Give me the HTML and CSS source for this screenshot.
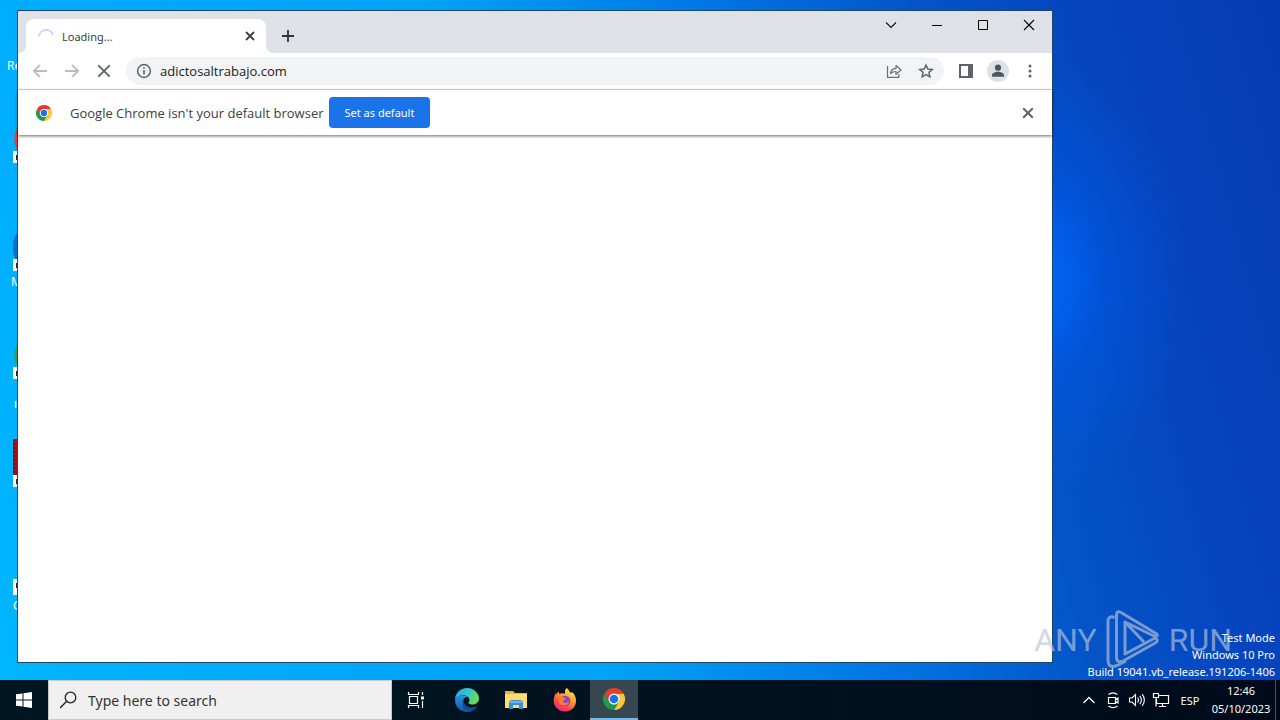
FILE: index.html
```html
<!DOCTYPE html>
<html lang="en">
<head>
    <meta charset="UTF-8">
    <meta name="viewport" content="width=device-width, initial-scale=1.0">
    <title>Desktop</title>
    <link rel="stylesheet" href="styles.css">
</head>
<body>
    <main class="desktop">
        <!-- icons peeking out from behind the browser -->
        <div class="desktop-icons">
            <span class="label label-recycle">Re</span>
            <span class="icon icon-red"></span>
            <span class="icon icon-blue"></span>
            <span class="label label-m">M</span>
            <span class="icon icon-green"></span>
            <span class="label label-tick">ı</span>
            <span class="icon icon-book"></span>
            <span class="icon icon-white"></span>
            <span class="label label-c">C</span>
            <span class="icon-top"></span>
        </div>

        <section class="window">
            <header class="tabstrip">
                <div class="tab">
                    <svg class="spinner" width="16" height="16" viewBox="0 0 16 16"><path d="M1 8.500A7.200 7.200 0 0 1 15 7" fill="none" stroke="#c9d8fa" stroke-width="2"/></svg>
                    <span class="tab-title">Loading...</span>
                    <button class="tab-close" aria-label="Close tab">
                        <svg width="16" height="16" viewBox="0 0 16 16"><path d="M4 4l8 8M12 4l-8 8" stroke="#3c4043" stroke-width="1.800"/></svg>
                    </button>
                </div>
                <button class="new-tab" aria-label="New tab">
                    <svg width="16" height="16" viewBox="0 0 16 16"><path d="M8 2v12M2 8h12" stroke="#303338" stroke-width="1.800"/></svg>
                </button>
                <div class="window-controls">
                    <button aria-label="Search tabs"><svg width="16" height="16" viewBox="0 0 16 16"><path d="M3 5.500l5 5 5-5" fill="none" stroke="#111" stroke-width="1.100"/></svg></button>
                    <button aria-label="Minimize"><svg width="16" height="16" viewBox="0 0 16 16"><path d="M3 8.500h10" stroke="#000"/></svg></button>
                    <button aria-label="Maximize"><svg width="16" height="16" viewBox="0 0 16 16"><path d="M3.500 3.500h9v9h-9z" fill="none" stroke="#000"/></svg></button>
                    <button aria-label="Close"><svg width="16" height="16" viewBox="0 0 16 16"><path d="M3 3l10 10M13 3L3 13" stroke="#000" stroke-width="1.100"/></svg></button>
                </div>
            </header>

            <div class="toolbar">
                <button class="tool" aria-label="Back"><svg width="16" height="16" viewBox="0 0 16 16"><path d="M15 8H2M8 1.800L1.800 8 8 14.200" fill="none" stroke="#babcbe" stroke-width="1.800"/></svg></button>
                <button class="tool" aria-label="Forward"><svg width="16" height="16" viewBox="0 0 16 16"><path d="M1 8h13M8 1.800L14.200 8 8 14.200" fill="none" stroke="#babcbe" stroke-width="1.800"/></svg></button>
                <button class="tool" aria-label="Stop"><svg width="16" height="16" viewBox="0 0 16 16"><path d="M2.300 2.300l11.400 11.400M13.700 2.300L2.300 13.700" stroke="#5f6368" stroke-width="1.900"/></svg></button>
                <div class="omnibox">
                    <svg width="16" height="16" viewBox="0 0 16 16"><circle cx="8" cy="8" r="6.400" fill="none" stroke="#5f6368" stroke-width="1.500"/><path d="M8 7v4.500M8 4.300v1.600" stroke="#5f6368" stroke-width="1.600"/></svg>
                    <input class="address" type="text" aria-label="Address" value="adictosaltrabajo.com">
                    <button class="tool" aria-label="Share"><svg width="16" height="16" viewBox="0 0 16 16"><path d="M1.500 3v11.300h11.300V11" fill="none" stroke="#6b6f73" stroke-width="1.200"/><path d="M4.500 10.500c.5-3.500 2-5 5.500-5.200V2.500L15 7l-5 4.300V8.500c-2.500 0-4 .4-5.500 2z" fill="none" stroke="#6b6f73" stroke-width="1.200" stroke-linejoin="round"/></svg></button>
                    <button class="tool" aria-label="Bookmark"><svg width="16" height="16" viewBox="0 0 16 16"><path d="M8 2l1.800 4.100 4.500.4-3.400 2.900 1 4.400L8 11.500l-3.900 2.300 1-4.400L1.700 6.500l4.500-.4z" fill="none" stroke="#5f6368" stroke-width="1.500"/></svg></button>
                </div>
                <button class="tool" aria-label="Side panel"><svg width="16" height="16" viewBox="0 0 16 16"><path d="M1 1h14v14H1zM3 3v10h7V3z" fill="#5f6368" fill-rule="evenodd"/></svg></button>
                <button class="tool" aria-label="Profile"><svg width="22" height="22" viewBox="0 0 22 22"><circle cx="11" cy="11" r="11" fill="#dee1e6"/><circle cx="11" cy="7.700" r="3.100" fill="#4e5662"/><path d="M5 16.700v-1.500c0-2.200 3.500-3.400 6-3.400s6 1.200 6 3.400v1.500z" fill="#4e5662"/></svg></button>
                <button class="tool" aria-label="Menu"><svg width="16" height="16" viewBox="0 0 16 16"><g fill="#5f6368"><circle cx="8" cy="3" r="1.500"/><circle cx="8" cy="8" r="1.500"/><circle cx="8" cy="13" r="1.500"/></g></svg></button>
            </div>

            <div class="infobar">
                <svg width="16" height="16" viewBox="0 0 48 48"><use href="#chrome-logo"/></svg>
                <span class="infobar-text">Google Chrome isn't your default browser</span>
                <button class="set-default">Set as default</button>
                <button class="infobar-close" aria-label="Dismiss"><svg width="16" height="16" viewBox="0 0 16 16"><path d="M3.200 3.200l9.600 9.600M12.800 3.200l-9.600 9.600" stroke="#5f6368" stroke-width="2"/></svg></button>
            </div>
            <div class="page"></div>
        </section>

        <div class="watermark">
            <span>ANY</span>
            <svg width="54" height="60" viewBox="0 0 54 60"><path d="M8.500 7.500Q2 5 2 12V50Q2 59 11 55.500L20 51M10.500 48V5Q10.500 0 15 2.500L50 23.500Q53 26 49 26.500L19 12V44L49 28Q53 29.500 50 32.500L18 50.500Q10.500 54 10.500 47M19 12L38 32" fill="none" stroke="currentColor" stroke-width="3" stroke-linejoin="round"/></svg>
            <span>RUN</span>
        </div>
        <div class="build-info">
            <p>Test Mode</p>
            <p>Windows 10 Pro</p>
            <p>Build 19041.vb_release.191206-1406</p>
        </div>
    </main>

    <footer class="taskbar">
        <button class="task start" aria-label="Start"><svg width="16" height="16" viewBox="0 0 16 16"><path d="M0 2.300l6.500-.9v6.100H0zM7.500 1.200L16 0v7.500H7.500zM0 8.500h6.500v6.100L0 13.700zM7.500 8.500H16V16l-8.500-1.200z" fill="#fff"/></svg></button>
        <div class="search">
            <svg width="18" height="18" viewBox="0 0 18 18"><circle cx="10.500" cy="6.500" r="5.300" fill="none" stroke="#222" stroke-width="1.300"/><path d="M6.700 10.300L0 17" stroke="#222" stroke-width="1.400"/></svg>
            <input type="text" aria-label="Search" placeholder="Type here to search">
        </div>
        <button class="task" aria-label="Task view"><svg width="18" height="18" viewBox="0 0 18 18"><path d="M1.500 1v2.500h10V1M1.500 17v-2.500h10V17M2.500 5.500h8v7h-8zM15.500 1v3M15.500 10v7" fill="none" stroke="#fff" stroke-width="1.200"/><path d="M14 5.500h3v3h-3z" fill="#fff"/></svg></button>
        <nav class="pinned">
            <button class="task" aria-label="Edge">
                <svg width="24" height="24" viewBox="0 0 24 24">
                    <defs>
                        <linearGradient id="edge-top" x1="0" y1="0" x2="1" y2="0.300"><stop offset="0" stop-color="#28a8e8"/><stop offset="0.600" stop-color="#36c5c9"/><stop offset="1" stop-color="#66dd55"/></linearGradient>
                        <linearGradient id="edge-bottom" x1="0" y1="0" x2="0" y2="1"><stop offset="0" stop-color="#2595e5"/><stop offset="1" stop-color="#1454a5"/></linearGradient>
                    </defs>
                    <path d="M0 12C0 5 5.500 0 12 0s12 5 12 10.500c0 3.500-2.700 6-6.200 6-2.500 0-4.300-.8-4.300-1.800 0-.6 1-1 1-2.700C14.500 9 11 7.300 7.800 7.300 4 7.300 1 9.500 0 12z" fill="url(#edge-top)"/>
                    <path d="M0 12c1-3 4-4.800 7.500-4.800 2.500 0 4.200.8 5 1.800-3.500.2-4.200 2.300-4.200 4.300 0 4.300 4.700 7.700 10.200 6.200 1.500-.4 3-1.300 3.500-1.300C20 22 16 24 12 24 5 24 0 18.500 0 12z" fill="url(#edge-bottom)"/>
                    <path d="M8.300 11.500C5.500 17 9 23 14.500 23.700c3.500-.7 6-2.700 7.500-5.500-6 3.500-13.500.5-13.700-6.700z" fill="#134b94"/>
                </svg>
            </button>
            <button class="task" aria-label="File Explorer"><svg width="22" height="18" viewBox="0 0 22 18"><path d="M0 0h8l2 2h12v15H0z" fill="#e8b33b"/><path d="M1 3h21v14H0V4z" fill="#ffdc70"/><path d="M4 18v-7l2-2h10l2 2v7h-4v-4H8v4z" fill="#3f8ed0"/><path d="M5 11h12" stroke="#67b4ec" stroke-width="2"/></svg></button>
            <button class="task" aria-label="Firefox">
                <svg width="24" height="24" viewBox="0 0 24 24">
                    <defs><linearGradient id="fox" x1="0.800" y1="0" x2="0.200" y2="1"><stop offset="0" stop-color="#fff04f"/><stop offset="0.400" stop-color="#ff9a2e"/><stop offset="0.700" stop-color="#ff4b45"/><stop offset="1" stop-color="#e5208a"/></linearGradient></defs>
                    <path d="M13.500 0c2 1.200 3 3.200 3.500 4.500.6 0 1.500.2 2-.5 3 2.500 4.300 6 4 9.500-.4 5.700-5 10-11 10S.7 19 .7 13c0-3.500 1-6.500 2.600-8.500v2.200C4 5.200 5 4 6 3.500V6c2-1 4.500-1 6 0-.5-2 0-4.500 1.500-6z" fill="url(#fox)"/>
                    <circle cx="12" cy="13" r="5.300" fill="#8047cf"/>
                    <path d="M5 9.500c2-1.800 4.500-1.200 6 .2l2 .3c0 1.500-2.500 1.500-3 2.800.2 2.500 4.300 3 6.500.5-.5 5-9 5.500-10.800 1C5 12.500 5 11 5 9.500z" fill="#ff7b36"/>
                </svg>
            </button>
            <button class="task active" aria-label="Chrome">
                <svg width="22" height="22" viewBox="0 0 48 48">
                    <g id="chrome-logo">
                        <path d="M24 12h20.800A24 24 0 0 1 24 48l10.400-18z" fill="#fcc934"/>
                        <path d="M3.200 12A24 24 0 0 0 24 48l10.400-18H13.600z" fill="#20994a"/>
                        <path d="M24 12h20.800A24 24 0 0 0 3.200 12l10.400 18z" fill="#e33b2e"/>
                        <circle cx="24" cy="24" r="12" fill="#fff"/>
                        <circle cx="24" cy="24" r="9.500" fill="#1a73e8"/>
                    </g>
                </svg>
            </button>
        </nav>
        <div class="tray">
            <button aria-label="Show hidden icons"><svg width="18" height="18" viewBox="0 0 18 18"><path d="M3.500 12L9 6.500l5.500 5.500" fill="none" stroke="#fff" stroke-width="1.300"/></svg></button>
            <button aria-label="Camera"><svg width="18" height="18" viewBox="0 0 18 18"><path d="M4.500 6.500h7v6h-7zM11.500 8.500l2.500-1.500v5l-2.500-1.500M4.500 3.500Q9 .2 13.500 3.500M4.500 15Q9 18.300 13.500 15" fill="none" stroke="#fff" stroke-width="1.200"/></svg></button>
            <button aria-label="Volume"><svg width="18" height="18" viewBox="0 0 18 18"><path d="M1.500 7h2.500l3.500-3.500v11L4 11H1.500zM9.500 6.500q2 2.500 0 5M11.800 4.800q3.200 4.200 0 8.400M14.200 3.200q4.300 5.800 0 11.600" fill="none" stroke="#fff" stroke-width="1.100"/></svg></button>
            <button aria-label="Network"><svg width="18" height="18" viewBox="0 0 18 18"><path d="M6 4.500h10.500v8H4.500V8M10.500 12.500v3M7 15.500h7M1.500 2.500h5v4h-5zM4 6.500v9" fill="none" stroke="#fff" stroke-width="1.200"/></svg></button>
            <button class="lang">ESP</button>
            <button class="clock"><span>12:46</span><span>05/10/2023</span></button>
            <button class="show-desktop" aria-label="Show desktop"></button>
        </div>
    </footer>
</body>
</html>
```

FILE: styles.css
```css
* {
    box-sizing: border-box;
}

body {
    margin: 0;
    height: 100vh;
    display: flex;
    flex-direction: column;
    overflow: hidden;
    font-family: "Noto Sans", "Open Sans", sans-serif;
    font-size: 11px;
}

button {
    display: flex;
    align-items: center;
    justify-content: center;
    padding: 0;
    border: none;
    background: none;
    font: inherit;
    color: inherit;
}

input {
    flex: 1;
    min-width: 0;
    padding: 0;
    border: none;
    outline: none;
    background: none;
    font: inherit;
    color: inherit;
}

svg {
    display: block;
    flex: none;
}

.desktop {
    position: relative;
    flex: 1;
    background:
        radial-gradient(ellipse 150px 220px at 81% 41%, #0068ff, rgba(0, 90, 230, 0.5) 45%, transparent),
        linear-gradient(75deg, #00b6ff 0%, #00aafc 18%, #00a2f6 42%, #0078e6 60%, #0454c8 75%, #0545bf 86%, #053bb2 100%);
}

/* desktop icons */
.desktop-icons {
    position: absolute;
    inset: 0;
    color: #fff;
    font-size: 12px;
}

.label,
.icon,
.icon-top {
    position: absolute;
}

.label {
    line-height: 16px;
}

.label-recycle {
    left: 7px;
    top: 58px;
}

.label-m {
    left: 11px;
    top: 274px;
}

.label-tick {
    left: 14px;
    top: 396px;
}

.label-c {
    left: 13px;
    top: 598px;
}

.icon {
    left: 13px;
    width: 48px;
    height: 48px;
}

/* shortcut arrow badge */
.icon::after {
    content: "";
    position: absolute;
    left: 0;
    bottom: 0;
    width: 12px;
    height: 12px;
    background: linear-gradient(#222, #222) 3px 4px / 5px 5px no-repeat #fff;
}

.icon-red {
    top: 115px;
    background: radial-gradient(circle, #f03a3a 22px, transparent 23px);
}

.icon-blue {
    top: 223px;
    background: radial-gradient(circle, #0b72cc 24px, transparent 25px);
}

.icon-green {
    top: 331px;
    background: radial-gradient(circle, #3f9a4c 22px, transparent 23px);
}

.icon-book {
    top: 439px;
    background: repeating-linear-gradient(#5c1420 0 2px, transparent 2px 4px) 0 0 / 2px 100% no-repeat #b00c18;
}

.icon-white {
    top: 547px;
}

.icon-white::after {
    height: 16px;
}

.icon-top {
    left: 168px;
    top: 9px;
    width: 28px;
    height: 28px;
    border-radius: 50%;
    background: #8c7c80;
}

/* browser window */
.window {
    position: absolute;
    inset: 10px 227px 17px 17px;
    display: flex;
    flex-direction: column;
    border: 1px solid #1c4866;
    background: #fff;
}

.tabstrip {
    display: flex;
    align-items: flex-end;
    height: 42px;
    padding-left: 8px;
    background: #dee1e6;
}

.tab {
    position: relative;
    display: flex;
    align-items: center;
    gap: 8px;
    width: 240px;
    height: 34px;
    padding: 0 8px 0 12px;
    border-radius: 8px 8px 0 0;
    background: #fff;
    color: #3c4043;
}

.tab::before,
.tab::after {
    content: "";
    position: absolute;
    bottom: 0;
    width: 8px;
    height: 8px;
}

.tab::before {
    right: 100%;
    background: radial-gradient(circle at 0 0, transparent 8px, #fff 8px);
}

.tab::after {
    left: 100%;
    background: radial-gradient(circle at 100% 0, transparent 8px, #fff 8px);
}

.tab-title {
    flex: 1;
}

.new-tab {
    width: 28px;
    height: 34px;
    margin-left: 8px;
}

.window-controls {
    display: flex;
    align-self: flex-start;
    margin-left: auto;
}

.window-controls button {
    width: 46px;
    height: 28px;
}

.toolbar {
    display: flex;
    align-items: center;
    height: 37px;
    padding: 0 6px;
    border-bottom: 1px solid #dadce0;
}

.tool {
    flex: none;
    width: 32px;
    height: 28px;
}

.omnibox {
    flex: 1;
    display: flex;
    align-items: center;
    height: 28px;
    margin: 0 6px;
    padding: 0 2px 0 10px;
    border-radius: 14px;
    background: #f1f3f4;
}

.address {
    padding-left: 8px;
    font-family: "Open Sans", sans-serif;
    font-size: 13px;
    color: #202124;
}

.infobar {
    position: relative;
    display: flex;
    align-items: center;
    height: 45px;
    padding: 0 16px 0 18px;
    box-shadow: 0 1px 3px rgba(0, 0, 0, 0.6);
    color: #3c4043;
}

.infobar-text {
    margin: 0 5px 0 18px;
    font-family: "Open Sans", sans-serif;
    font-size: 13px;
}

.set-default {
    height: 31px;
    padding: 0 16px;
    border-radius: 4px;
    background: #1a73e8;
    color: #fff;
}

.infobar-close {
    margin-left: auto;
}

.page {
    flex: 1;
}

/* overlays in the bottom right corner */
.watermark {
    position: absolute;
    right: 48px;
    bottom: 10px;
    display: flex;
    align-items: center;
    gap: 9px;
    color: #b9c3d8;
    opacity: 0.65;
    font-family: Roboto, sans-serif;
    font-size: 32px;
    line-height: 60px;
}

.build-info {
    position: absolute;
    right: 5px;
    bottom: 0;
    color: #fff;
    text-align: right;
    line-height: 17px;
}

.build-info p {
    margin: 0;
}

/* taskbar */
.taskbar {
    display: flex;
    height: 40px;
    background: linear-gradient(90deg, #001721, #00121f 60%, #000a1a);
    color: #fff;
}

.task {
    width: 48px;
    height: 40px;
}

.search {
    display: flex;
    align-items: center;
    gap: 10px;
    width: 344px;
    padding: 0 11px;
    border: 1px solid #c8c8c8;
    background: #f0f0f0;
    color: #333;
    font-size: 14px;
}

.search input::placeholder {
    color: #333;
    opacity: 1;
}

.pinned {
    display: flex;
    gap: 1px;
    margin-left: 3px;
}

.active {
    background: #37474f;
    border-bottom: 2px solid #76b9ed;
}

.tray {
    display: flex;
    margin-left: auto;
}

.tray button {
    width: 24px;
}

.tray .lang {
    width: 34px;
}

.tray .clock {
    width: 68px;
    flex-direction: column;
    line-height: 18px;
}

.tray .show-desktop {
    width: 5px;
    border-left: 1px solid #4a5360;
}
```
